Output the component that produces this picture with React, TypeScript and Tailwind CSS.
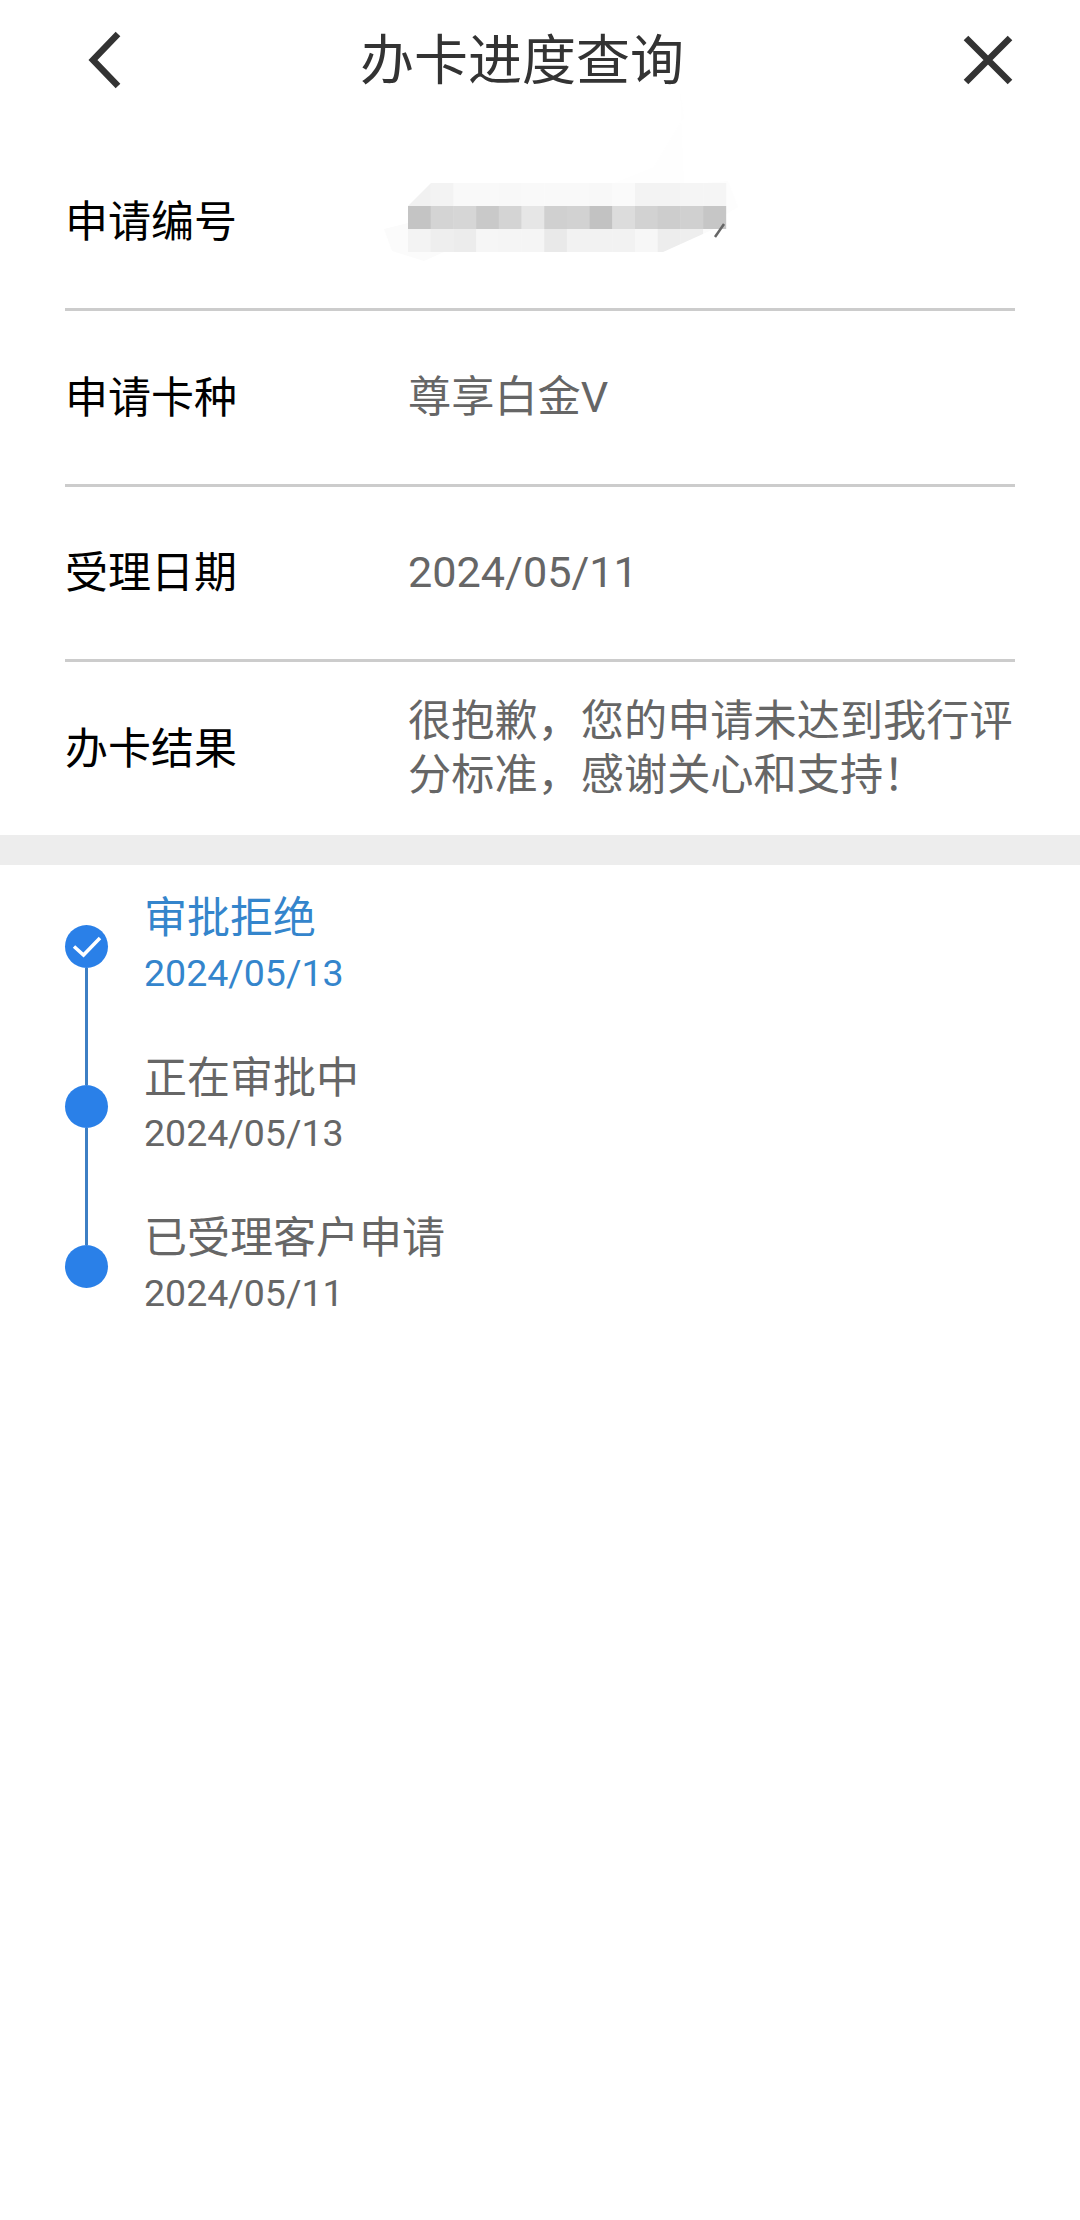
const FONT = "font-['Roboto','Noto_Sans_CJK_SC',sans-serif]";

const TOP = ["#f1f1f1", "#f3f3f3", "#f9f9f9", "#f9f9f9", "#f8f8f8", "#f9f9f9", "#f9f9f9", "#f9f9f9", "#f8f8f8", "#fafafa", "#f3f3f3", "#f3f3f3", "#f5f5f5", "#f5f5f5"];
const MID = ["#c4c4c4", "#d4d4d4", "#d6d6d6", "#c9c9c9", "#d4d4d4", "#e6e6e6", "#d0d0d0", "#d2d2d2", "#c2c2c2", "#dcdcdc", "#d2d2d2", "#cdcdcd", "#d0d0d0", "#c6c6c6"];
const BOT = ["#f3f3f3", "#eeeeee", "#ececec", "#f6f6f6", "#f5f5f5", "#f5f5f5", "#e9e9e9", "#f2f2f2", "#f2f2f2", "#f2f2f2", "#f7f7f7", "#ededed", "#eeeeee", "#fbfbfb"];

function Mosaic() {
  const w = 22.7;
  return (
    <svg width="350" height="90" viewBox="0 0 350 90" className="-ml-6 block overflow-visible">
      <polygon points="296,-88 300,-60 270,-10 230,6 300,6" fill="#fefefe" />
      <polygon points="0,52 24,46 24,75 60,75 40,84 8,74" fill="#fbfbfb" />
      <polygon points="344,36 354,30 344,4 320,6 320,54 300,64" fill="#fdfdfd" />
      {TOP.map((c, i) => (
        <rect key={"t" + i} x={24 + i * w} y="6" width={w + 0.4} height="23" fill={c} />
      ))}
      {MID.map((c, i) => (
        <rect key={"m" + i} x={24 + i * w} y="29" width={w + 0.4} height="23" fill={c} />
      ))}
      {BOT.map((c, i) => (
        <rect key={"b" + i} x={24 + i * w} y="52" width={w + 0.4} height="23" fill={c} />
      ))}
      <polygon points="24,29 47,6 24,6" fill="#ffffff" />
      <polygon points="278,75.5 345,75.5 345,52 330,52" fill="#ffffff" />
      <line x1="340" y1="47" x2="331" y2="60" stroke="#666666" strokeWidth="2.5" />
    </svg>
  );
}

function Row({ label, children, rowClass }: { label: string; children: React.ReactNode; rowClass: string }) {
  return (
    <div className={`flex items-center ${rowClass}`}>
      <div className="w-[343px] shrink-0 text-[43px] leading-[54px] text-black">{label}</div>
      <div className="min-w-0 flex-1 text-[43.2px] leading-[54px] text-[#666666]">{children}</div>
    </div>
  );
}

function Step({ title, date, active, first, last }: { title: string; date: string; active?: boolean; first?: boolean; last?: boolean }) {
  return (
    <div className="flex h-[160px]">
      <div className="flex w-[43px] shrink-0 flex-col items-center">
        <div className={first ? "w-[3px] flex-1" : "w-[3px] flex-1 bg-[#3d7fc4]"} />
        <div className="flex h-[43px] w-[43px] shrink-0 items-center justify-center rounded-full bg-[#2a80e8]">
          {active && (
            <svg width="30" height="23" viewBox="0 0 30 23" fill="none">
              <path d="M2 11.5 L11.5 20 L28 3" stroke="#ffffff" strokeWidth="3.5" />
            </svg>
          )}
        </div>
        <div className={last ? "w-[3px] flex-1" : "w-[3px] flex-1 bg-[#3d7fc4]"} />
      </div>
      <div className={active ? "ml-[36px] flex flex-col justify-center text-[#3485cc]" : "ml-[36px] flex flex-col justify-center text-[#666666]"}>
        <div className="text-[43px] leading-[55px]">{title}</div>
        <div className="text-[37.5px] leading-[55px]">{date}</div>
      </div>
    </div>
  );
}

export default function App() {
  return (
    <div className={`h-[2220px] w-[1080px] overflow-hidden bg-white ${FONT}`}>
      <header className="flex h-[135px] items-start justify-between pl-[84px] pr-[66px] pt-[28px]">
        <svg width="44" height="62" viewBox="0 0 44 62" fill="none">
          <path d="M34 6 L9 32 L34 58" stroke="#333333" strokeWidth="6.5" />
        </svg>
        <h1 className="-ml-[46px] mt-[2px] text-[54px] font-normal leading-[64px] text-[#333333]">办卡进度查询</h1>
        <svg width="52" height="52" viewBox="0 0 52 52" fill="none" className="mt-[6px]">
          <path d="M4 4 L48 48 M48 4 L4 48" stroke="#333333" strokeWidth="6.5" />
        </svg>
      </header>

      <div className="pl-[65px] pr-[65px]">
        <Row label="申请编号" rowClass="h-[176px] border-b-[3px] border-[#cccccc]">
          <Mosaic />
        </Row>
        <Row label="申请卡种" rowClass="h-[176px] border-b-[3px] border-[#cccccc]">尊享白金V</Row>
        <Row label="受理日期" rowClass="h-[175px] border-b-[3px] border-[#cccccc]">2024/05/11</Row>
        <Row label="办卡结果" rowClass="h-[173px]">
          很抱歉，您的申请未达到我行评分标准，感谢关心和支持！
        </Row>
      </div>

      <div className="h-[30px] bg-[#ededed]" />

      <div className="px-[65px] pt-px">
        <Step first active title="审批拒绝" date="2024/05/13" />
        <Step title="正在审批中" date="2024/05/13" />
        <Step last title="已受理客户申请" date="2024/05/11" />
      </div>
    </div>
  );
}
